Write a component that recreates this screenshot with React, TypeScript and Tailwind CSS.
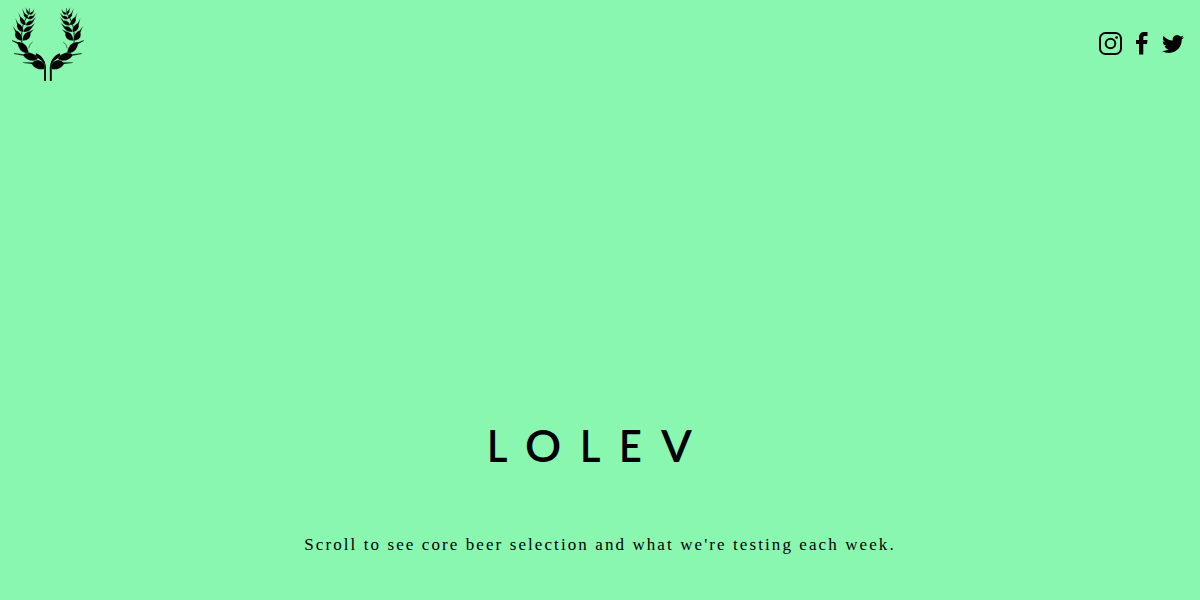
import React from 'react';

function Branch() {
  return (
    <g>
      <path d="M111 241V207C112 188 107 178 94 171C76 163 53 159 46 142C38 123 41 104 42 92C44 72 52 56 63 40" fill="none" stroke="#000" strokeWidth="2.800" />
      <path d="M108.500 243V200H114V243Z" />
      <path d="M84 160C99 165 111 178 114 203L109 202C107 186 98 177 82 172Z" />
      <g stroke="#8af7b0" strokeWidth="0.800">
        <path d="M45 187L74 187C83 176 100 178 110 194L111 207C97 211 80 207 71 192L45 189Z" />
        <path d="M18 159L47 163C57 153 78 157 90 176C79 187 57 184 46 167L18 162Z" />
        <path d="M12 120L28 126C44 124 60 134 62 159C45 161 33 151 29 132L12 123Z" />
        <path d="M14 77L24 91C38 97 43 108 44 122C28 123 18 113 22 97Z" />
        <path d="M44 122C43 109 50 96 66 94L78 88L68 99C69 114 60 122 44 122Z" />
        <path d="M22 54L30 69C42 75 47 84 47 96C34 96 25 87 27 73Z" />
        <path d="M46 96C48 84 57 78 69 79L82 68L72 83C67 92 59 97 46 96Z" />
        <path d="M31 36L38 50C48 56 54 65 54 76C42 75 34 67 36 54Z" />
        <path d="M53 76C55 66 63 61 72 62L84 50L76 65C71 74 64 78 53 76Z" />
        <path d="M42 24L50 39C57 44 61 50 61 57C51 55 46 49 47 42Z" />
        <path d="M59 57C61 50 67 46 74 48L84 38L78 50C73 57 68 59 59 57Z" />
        <path d="M52 22L58 30C63 34 65 38 64 44C57 41 54 37 55 32Z" />
        <path d="M64 44C65 38 69 35 73 35L79 26L76 38C73 42 71 45 64 44Z" />
      </g>
      <path d="M65 43L64 25" stroke="#000" strokeWidth="1.800" />
      <path d="M62 145L66 133L74 126" fill="none" stroke="#000" strokeWidth="1.500" />
    </g>
  );
}

export default function App() {
  return (
    <div className="flex h-[600px] w-full flex-col overflow-hidden bg-[#8af7b0] text-black">
      <header className="flex h-[90px] items-start justify-between pl-2 pr-4">
        <svg className="h-[90px] w-20" viewBox="0 0 240 270" aria-label="Lolev">
          <Branch />
          <g transform="translate(239.500 0) scale(-1 1)"><Branch /></g>
        </svg>
        <nav className="flex items-center pt-8">
          <svg className="mr-[14px] h-[23px] w-[23px]" viewBox="0 0 23 23" fill="none" stroke="#000" strokeWidth="2" aria-label="Instagram">
            <rect x="1" y="1" width="21" height="21" rx="5.500" />
            <circle cx="11.500" cy="11.500" r="4.800" />
            <circle cx="17.600" cy="5.500" r="1.350" fill="#000" stroke="none" />
          </svg>
          <svg className="mr-[14px] h-[23px] w-3" viewBox="0 0 12 23" aria-label="Facebook">
            <path d="M3 22.500V12H0V8H3V5.500C3 2 5 0 8.200 0H11.500V4H9C7.800 4 7.300 4.600 7.300 5.700V8H11.500L11 12H7.300V22.500Z" />
          </svg>
          <svg className="h-[22px] w-[22px]" viewBox="0 0 24 24" aria-label="Twitter">
            <path d="M23.953 4.570a10 10 0 01-2.825.775 4.958 4.958 0 002.163-2.723c-.951.555-2.005.959-3.127 1.184a4.920 4.920 0 00-8.384 4.482C7.690 8.095 4.067 6.130 1.640 3.162a4.822 4.822 0 00-.666 2.475c0 1.710.870 3.213 2.188 4.096a4.904 4.904 0 01-2.228-.616v.060a4.923 4.923 0 003.946 4.827 4.996 4.996 0 01-2.212.085 4.936 4.936 0 004.604 3.417 9.867 9.867 0 01-6.102 2.105c-.390 0-.779-.023-1.170-.067a13.995 13.995 0 007.557 2.209c9.053 0 13.998-7.496 13.998-13.985 0-.210 0-.420-.015-.630A9.935 9.935 0 0024 4.590z" />
          </svg>
        </nav>
      </header>
      <main className="flex flex-col items-center pt-[325px]">
        <h1 className="flex w-[230px] pl-[2px] font-['Lato',sans-serif] text-[45px] font-semibold leading-[60px]">
          <span className="w-[38px] origin-left scale-x-[0.88]">L</span>
          <span className="w-[55px]">O</span>
          <span className="w-[39px] origin-left scale-x-[0.88]">L</span>
          <span className="w-[42px] origin-left scale-x-[0.88]">E</span>
          <span>V</span>
        </h1>
        <p className="mt-[56px] whitespace-nowrap font-['Liberation_Serif',serif] text-[17px] leading-7 tracking-[2.090px]">
          Scroll to see core beer selection and what we're testing each week.
        </p>
      </main>
    </div>
  );
}
